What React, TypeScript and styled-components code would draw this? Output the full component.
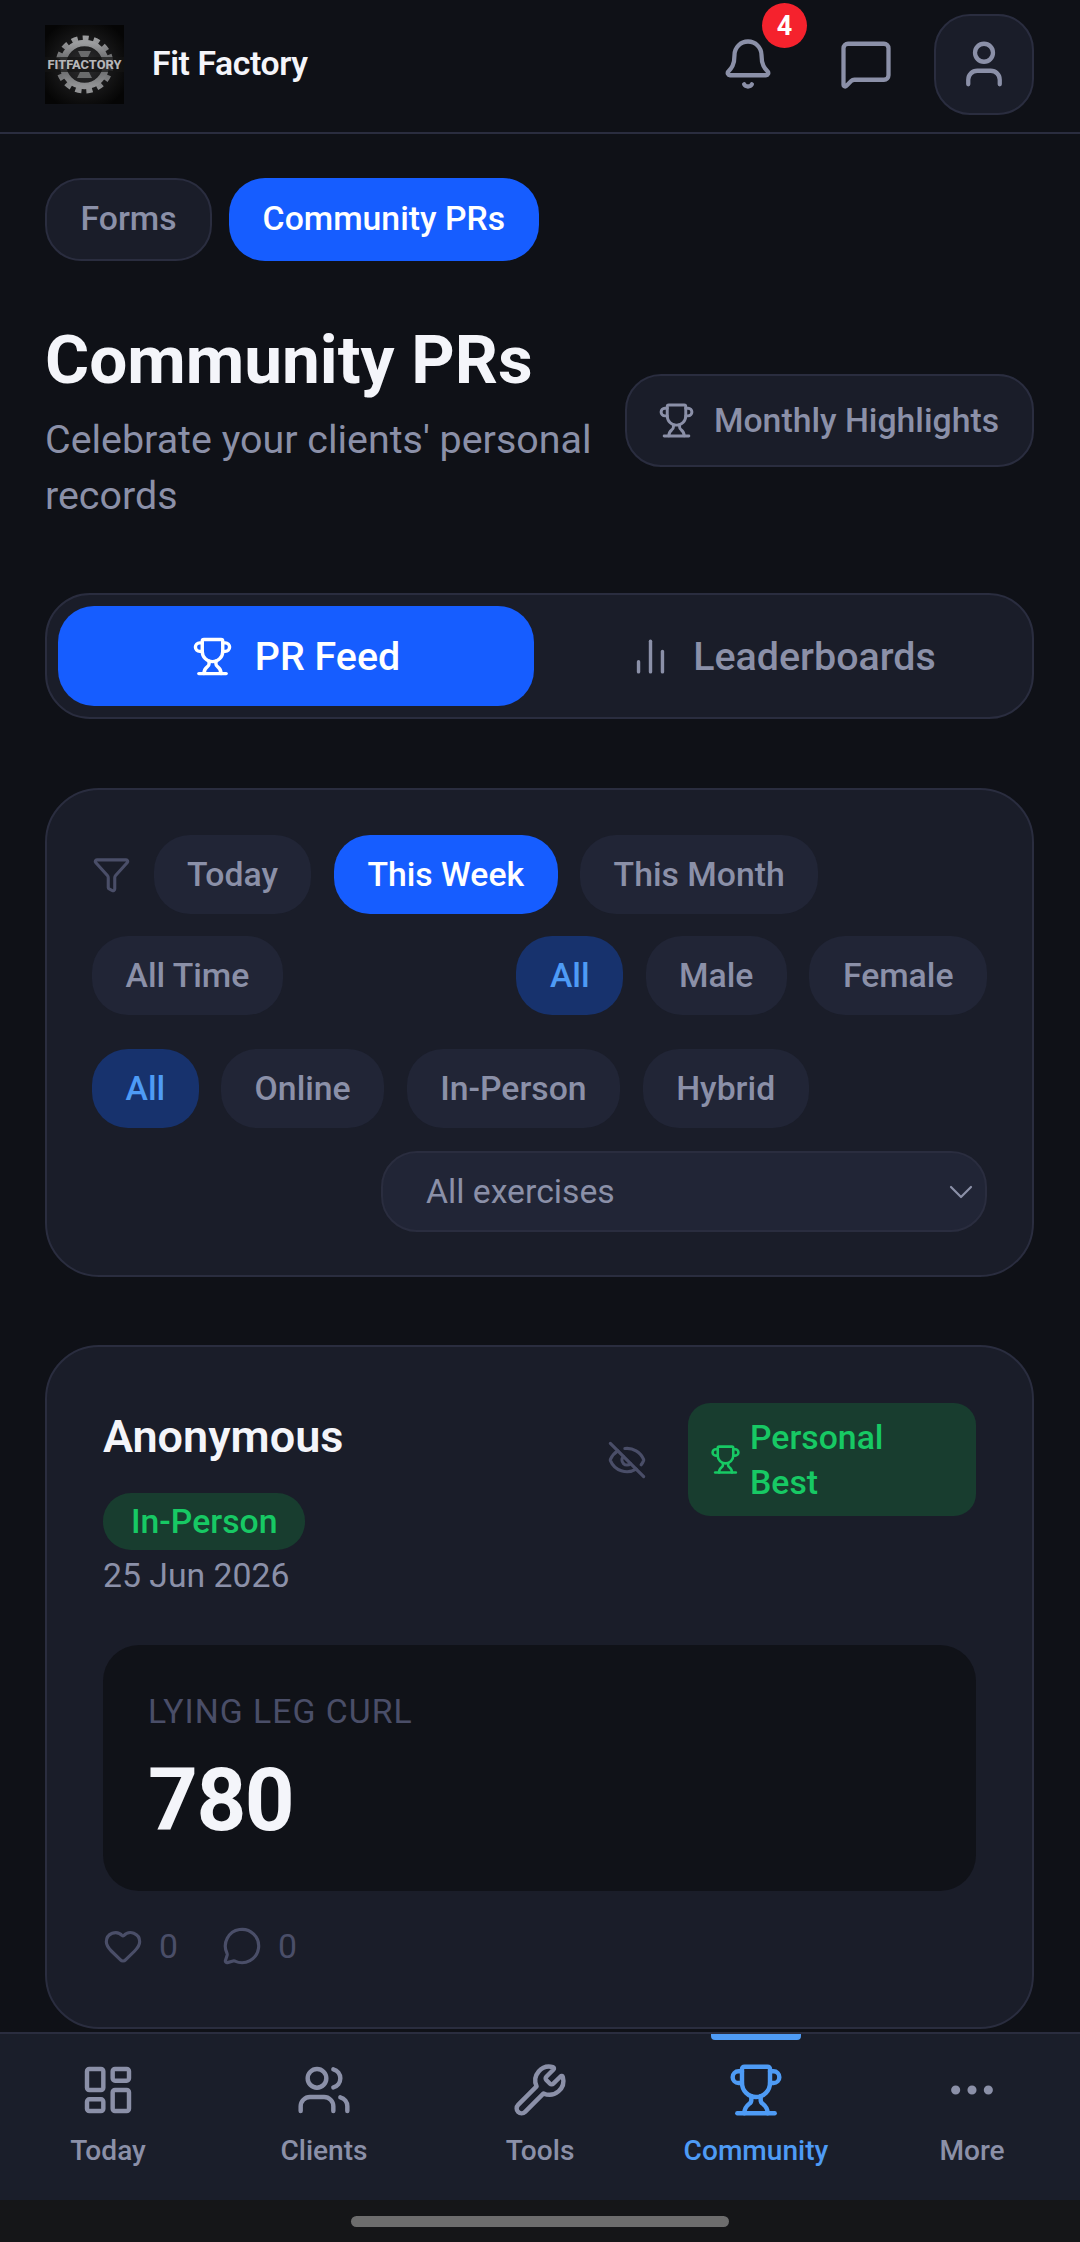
import React from "react";
import styled, { createGlobalStyle } from "styled-components";
import {
  Bell,
  ChartNoAxesColumn,
  ChevronDown,
  Ellipsis,
  EyeOff,
  Funnel,
  Heart,
  LayoutDashboard,
  MessageCircle,
  MessageSquare,
  Trophy,
  User,
  Users,
  Wrench,
} from "lucide-react";

const GlobalStyle = createGlobalStyle`
  html, body {
    margin: 0;
    padding: 0;
    background: #0f1117;
  }
  * {
    box-sizing: border-box;
  }
`;

const Page = styled.div`
  width: 1080px;
  height: 2242px;
  display: flex;
  flex-direction: column;
  overflow: hidden;
  background: #0f1117;
  color: #f1f3f9;
  font-family: Roboto, "Liberation Sans", sans-serif;
`;

const Header = styled.header`
  height: 134px;
  flex: none;
  display: flex;
  align-items: center;
  padding: 0 46px 4px 45px;
  border-bottom: 2px solid #2a2d3f;
`;

const Logo = styled.svg`
  width: 79px;
  height: 79px;
  flex: none;
`;

const Brand = styled.div`
  margin-left: 28px;
  padding-bottom: 2px;
  flex: 1;
  font-size: 33.75px;
  font-weight: 600;
  letter-spacing: -0.4px;
  color: #f4f5fa;
`;

const IconButton = styled.div`
  position: relative;
  display: flex;
  color: #8b90a8;
`;

const Badge = styled.span`
  position: absolute;
  top: -34px;
  left: 41px;
  width: 45px;
  height: 45px;
  border-radius: 50%;
  background: #f5222d;
  color: #fff;
  font-size: 27px;
  font-weight: 700;
  display: flex;
  align-items: center;
  justify-content: center;
`;

const HeaderIcons = styled.div`
  display: flex;
  align-items: center;
  gap: 64px;
`;

const ProfileButton = styled.div`
  width: 100px;
  height: 101px;
  border-radius: 36px;
  background: #1a1d29;
  border: 2px solid #2a2d3f;
  color: #8b90a8;
  display: flex;
  align-items: center;
  justify-content: center;
  margin-left: -23px;
`;

const Main = styled.main`
  flex: 1;
  min-height: 0;
  padding: 44px 46px 0 45px;
`;

const SubTabs = styled.div`
  display: flex;
  gap: 17px;
`;

const SubTab = styled.div<{ $active?: boolean }>`
  height: 83px;
  padding: 0 33.5px 3px;
  border-radius: 36px;
  display: flex;
  align-items: center;
  font-size: 33.75px;
  font-weight: 500;
  background: ${({ $active }) => ($active ? "#165dff" : "#1a1d29")};
  color: ${({ $active }) => ($active ? "#fff" : "#8b90a8")};
  border: ${({ $active }) => ($active ? "none" : "2px solid #2a2d3f")};
`;

const TitleRow = styled.div`
  margin-top: 56px;
  display: flex;
  align-items: center;
  justify-content: space-between;
`;

const TitleBlock = styled.div`
  width: 570px;
`;

const Title = styled.h1`
  margin: 0 0 9px;
  font-size: 67.5px;
  line-height: 86px;
  font-weight: 700;
  color: #f4f5fa;
`;

const Subtitle = styled.p`
  margin: 0;
  font-size: 39.4px;
  line-height: 56px;
  color: #8b90a8;
`;

const HighlightsButton = styled.div`
  width: 409px;
  height: 93px;
  flex: none;
  padding-right: 2px;
  border-radius: 36px;
  background: #1a1d29;
  border: 2px solid #2a2d3f;
  color: #8b90a8;
  display: flex;
  align-items: center;
  justify-content: center;
  gap: 19px;
  font-size: 33.75px;
  font-weight: 500;
`;

const Segmented = styled.div`
  margin-top: 69px;
  height: 126px;
  padding: 11px;
  border-radius: 45px;
  border: 2px solid #2a2d3f;
  background: #1a1d29;
  display: grid;
  grid-template-columns: 1fr 1fr;
  gap: 11px;
`;

const Segment = styled.div<{ $active?: boolean }>`
  border-radius: 36px;
  display: flex;
  align-items: center;
  justify-content: center;
  gap: 22px;
  font-size: 39.4px;
  font-weight: 500;
  background: ${({ $active }) => ($active ? "#165dff" : "transparent")};
  color: ${({ $active }) => ($active ? "#fff" : "#8b90a8")};
`;

const FilterCard = styled.section`
  margin-top: 69px;
  height: 489px;
  padding: 45px 45px 0;
  border-radius: 54px;
  border: 2px solid #2a2d3f;
  background: #1a1d29;
`;

const ChipRow = styled.div<{ $top?: number; $between?: boolean }>`
  margin-top: ${({ $top }) => $top ?? 0}px;
  display: flex;
  align-items: center;
  justify-content: ${({ $between }) => ($between ? "space-between" : "flex-start")};
  gap: 22.5px;
`;

const ChipGroup = styled.div`
  display: flex;
  gap: 22.5px;
`;

const FunnelIcon = styled(Funnel)`
  color: #4a4e68;
`;

const Chip = styled.div<{ $variant?: "solid" | "soft" }>`
  height: 79px;
  padding: 0 33.5px;
  border-radius: 36px;
  display: flex;
  align-items: center;
  font-size: 33.75px;
  font-weight: 500;
  background: ${({ $variant }) =>
    $variant === "solid" ? "#165dff" : $variant === "soft" ? "#17326d" : "#212536"};
  color: ${({ $variant }) =>
    $variant === "solid" ? "#fff" : $variant === "soft" ? "#4e9bf5" : "#8b90a8"};
`;

const SelectBox = styled.div`
  margin: 23px 0 0 auto;
  width: 606px;
  height: 81px;
  padding: 0 4px 0 43px;
  border-radius: 36px;
  border: 2px solid #2a2d3f;
  background: #212536;
  color: #8b90a8;
  display: flex;
  align-items: center;
  justify-content: space-between;
  font-size: 33.75px;
`;

const PrCard = styled.article`
  margin-top: 68px;
  height: 684px;
  padding: 56px 56px 0;
  border-radius: 54px;
  border: 2px solid #2a2d3f;
  background: #1a1d29;
`;

const CardTop = styled.div`
  display: flex;
  justify-content: space-between;
  align-items: flex-start;
  height: 242px;
`;

const Person = styled.div`
  display: flex;
  flex-direction: column;
  align-items: flex-start;
`;

const Name = styled.div`
  font-size: 45px;
  font-weight: 600;
  line-height: 56px;
  margin-top: 6px;
  color: #f4f5fa;
`;

const ModePill = styled.div`
  margin-top: 28px;
  height: 57px;
  padding: 0 28px;
  border-radius: 28px;
  background: #183d2f;
  color: #17c964;
  font-size: 33.75px;
  font-weight: 500;
  display: flex;
  align-items: center;
`;

const DateText = styled.div`
  margin-top: 3px;
  font-size: 33.75px;
  line-height: 45px;
  color: #8b90a8;
`;

const BadgeArea = styled.div`
  display: flex;
  align-items: center;
  gap: 41px;
`;

const HiddenIcon = styled(EyeOff)`
  color: #4a4e68;
`;

const BestBadge = styled.div`
  width: 288px;
  height: 113px;
  padding: 0 22px;
  border-radius: 22px;
  background: #183d2f;
  color: #17c964;
  display: flex;
  align-items: center;
  gap: 9px;
  font-size: 33.75px;
  font-weight: 500;
  line-height: 45px;
`;

const LiftBox = styled.div`
  height: 246px;
  padding: 47px 45px 0;
  border-radius: 36px;
  background: #101218;
`;

const LiftName = styled.div`
  font-size: 33.75px;
  line-height: 40px;
  font-weight: 400;
  letter-spacing: 1px;
  text-transform: uppercase;
  color: #4a4e68;
`;

const LiftValue = styled.div`
  margin-top: 18px;
  font-size: 87px;
  line-height: 100px;
  font-weight: 700;
  letter-spacing: -1.5px;
  color: #f4f5fa;
`;

const Reactions = styled.div`
  margin-top: 35px;
  display: flex;
  gap: 44px;
  color: #4a4e68;
`;

const Reaction = styled.div`
  display: flex;
  align-items: center;
  gap: 16px;
  font-size: 33.75px;
`;

const BottomNav = styled.nav`
  position: relative;
  flex: none;
  height: 168px;
  display: grid;
  grid-template-columns: repeat(5, 1fr);
  background: #1a1e2a;
  border-top: 2px solid #2a2d3f;
`;

const NavItem = styled.div<{ $active?: boolean }>`
  position: relative;
  display: flex;
  flex-direction: column;
  align-items: center;
  padding-top: 28px;
  gap: 16px;
  font-size: 28.1px;
  font-weight: 500;
  color: ${({ $active }) => ($active ? "#4e9bf5" : "#8b90a8")};
`;

const ActiveBar = styled.span`
  position: absolute;
  top: 0;
  left: 63px;
  width: 90px;
  height: 6px;
  border-radius: 0 0 4px 4px;
  background: #4e9bf5;
`;

const HomeArea = styled.div`
  flex: none;
  height: 42px;
  background: #151618;
  display: flex;
  justify-content: center;
  padding-top: 16px;
`;

const HomePill = styled.div`
  width: 378px;
  height: 11px;
  border-radius: 6px;
  background: #6d6d6d;
`;

const FitLogo = () => (
  <Logo viewBox="0 0 79 79">
    <defs>
      <radialGradient id="bg" cx="50%" cy="50%" r="60%">
        <stop offset="0%" stopColor="#2e2e30" />
        <stop offset="100%" stopColor="#050505" />
      </radialGradient>
      <linearGradient id="steel" x1="0" y1="0" x2="0" y2="1">
        <stop offset="0%" stopColor="#9c9d9f" />
        <stop offset="50%" stopColor="#5c5d5f" />
        <stop offset="100%" stopColor="#929395" />
      </linearGradient>
    </defs>
    <rect width="79" height="79" fill="url(#bg)" />
    <circle cx="39.5" cy="39.5" r="26" fill="none" stroke="url(#steel)" strokeWidth="6" strokeDasharray="6 4.9" />
    <circle cx="39.5" cy="39.5" r="21.5" fill="none" stroke="url(#steel)" strokeWidth="6.5" />
    <path d="M33 26 L46 26 L43 32 L36 32 Z M35 47 L44 47 L47 53 L32 53 Z" fill="#6a6b6c" />
    <rect x="0" y="32" width="79" height="15" fill="#141414" opacity="0.7" />
    <text x="39.5" y="44" textAnchor="middle" fontSize="12" fontWeight="800" fill="#b5b6b8" fontFamily="Roboto, sans-serif" textLength="74" lengthAdjust="spacingAndGlyphs">
      FITFACTORY
    </text>
  </Logo>
);

const navItems = [
  { label: "Today", Icon: LayoutDashboard },
  { label: "Clients", Icon: Users },
  { label: "Tools", Icon: Wrench },
  { label: "Community", Icon: Trophy, active: true },
  { label: "More", Icon: Ellipsis },
];

export default function App() {
  return (
    <Page>
      <GlobalStyle />
      <Header>
        <FitLogo />
        <Brand>Fit Factory</Brand>
        <HeaderIcons>
          <IconButton>
            <Bell size={54} strokeWidth={1.9} />
            <Badge>4</Badge>
          </IconButton>
          <IconButton>
            <MessageSquare size={54} strokeWidth={1.9} />
          </IconButton>
          <ProfileButton>
            <User size={54} strokeWidth={1.9} />
          </ProfileButton>
        </HeaderIcons>
      </Header>

      <Main>
        <SubTabs>
          <SubTab>Forms</SubTab>
          <SubTab $active>Community PRs</SubTab>
        </SubTabs>

        <TitleRow>
          <TitleBlock>
            <Title>Community PRs</Title>
            <Subtitle>Celebrate your clients' personal records</Subtitle>
          </TitleBlock>
          <HighlightsButton>
            <Trophy size={37} strokeWidth={1.9} />
            Monthly Highlights
          </HighlightsButton>
        </TitleRow>

        <Segmented>
          <Segment $active>
            <Trophy size={41} strokeWidth={2} />
            PR Feed
          </Segment>
          <Segment>
            <ChartNoAxesColumn size={41} strokeWidth={2} />
            Leaderboards
          </Segment>
        </Segmented>

        <FilterCard>
          <ChipRow>
            <FunnelIcon size={39} strokeWidth={1.9} />
            <Chip>Today</Chip>
            <Chip $variant="solid">This Week</Chip>
            <Chip>This Month</Chip>
          </ChipRow>
          <ChipRow $top={22} $between>
            <Chip>All Time</Chip>
            <ChipGroup>
              <Chip $variant="soft">All</Chip>
              <Chip>Male</Chip>
              <Chip>Female</Chip>
            </ChipGroup>
          </ChipRow>
          <ChipRow $top={34}>
            <Chip $variant="soft">All</Chip>
            <Chip>Online</Chip>
            <Chip>In-Person</Chip>
            <Chip>Hybrid</Chip>
          </ChipRow>
          <SelectBox>
            All exercises
            <ChevronDown size={40} strokeWidth={1.3} />
          </SelectBox>
        </FilterCard>

        <PrCard>
          <CardTop>
            <Person>
              <Name>Anonymous</Name>
              <ModePill>In-Person</ModePill>
              <DateText>25 Jun 2026</DateText>
            </Person>
            <BadgeArea>
              <HiddenIcon size={40} strokeWidth={1.9} />
              <BestBadge>
                <Trophy size={31} strokeWidth={2} />
                <span>
                  Personal
                  <br />
                  Best
                </span>
              </BestBadge>
            </BadgeArea>
          </CardTop>
          <LiftBox>
            <LiftName>Lying Leg Curl</LiftName>
            <LiftValue>780</LiftValue>
          </LiftBox>
          <Reactions>
            <Reaction>
              <Heart size={40} strokeWidth={1.9} />0
            </Reaction>
            <Reaction>
              <MessageCircle size={40} strokeWidth={1.9} />0
            </Reaction>
          </Reactions>
        </PrCard>
      </Main>

      <BottomNav>
        {navItems.map(({ label, Icon, active }) => (
          <NavItem key={label} $active={active}>
            {active && <ActiveBar />}
            <Icon size={56} strokeWidth={1.9} />
            {label}
          </NavItem>
        ))}
      </BottomNav>
      <HomeArea>
        <HomePill />
      </HomeArea>
    </Page>
  );
}
